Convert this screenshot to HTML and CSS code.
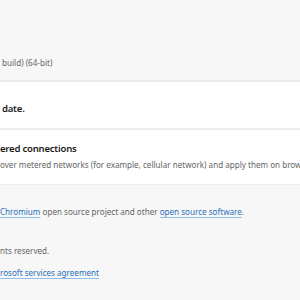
FILE: index.html
```html
<!DOCTYPE html>
<html>
<head>
<meta charset="utf-8">
<link rel="stylesheet" href="styles.css">
</head>
<body>
<div class="page">
  <section class="top">
    <p class="muted line">build) (64-bit)</p>
  </section>
  <section class="card status">
    <p class="strong line">date.</p>
  </section>
  <section class="card metered">
    <p class="strong line">ered connections</p>
    <p class="muted line">over metered networks (for example, cellular network) and apply them on browser restart. Charges may apply.</p>
  </section>
  <section class="foot">
    <p class="muted line credit"><a href="#" class="link">Chromium</a> open source project and other <a href="#" class="link">open source software</a>.</p>
    <p class="muted line rights">nts reserved.</p>
    <p class="muted line legal"><a href="#" class="link">rosoft services agreement</a></p>
  </section>
</div>
</body>
</html>
```
FILE: styles.css
```css
html, body {
  margin: 0;
  padding: 0;
  background: #f7f7f7;
}
.page {
  width: 300px;
  height: 300px;
  overflow: hidden;
  font-family: "Noto Sans", "Open Sans", sans-serif;
  display: flex;
  flex-direction: column;
}
p { margin: 0; }
.line {
  white-space: nowrap;
  overflow: hidden;
  line-height: 14px;
}
.top {
  height: 82px;
  box-sizing: border-box;
  padding: 56px 0 0 2px;
  border-bottom: 2px solid #ebebeb;
  background: #f7f7f7;
  flex: none;
}
.card {
  background: #fff;
  flex: none;
}
.status {
  height: 48px;
  box-sizing: border-box;
  padding: 20px 0 0 2px;
  border-bottom: 2px solid #ececec;
}
.metered {
  height: 54px;
  box-sizing: border-box;
  padding: 12px 0 0 0;
  display: flex;
  flex-direction: column;
  gap: 2px;
}
.muted {
  font-size: 8.1px;
  color: #666;
}
.strong {
  font-size: 9.6px;
  font-weight: 600;
  letter-spacing: -0.25px;
  color: #1b1b1b;
}
.foot {
  border-top: 1px solid #ececec;
  padding-top: 20px;
  display: flex;
  flex-direction: column;
}
.link {
  color: #2a6fb8;
  text-decoration: underline;
  text-decoration-color: #8fbfe6;
  text-underline-offset: 2px;
}
.rights { margin-top: 25px; }
.legal { margin-top: 8px; }
```
